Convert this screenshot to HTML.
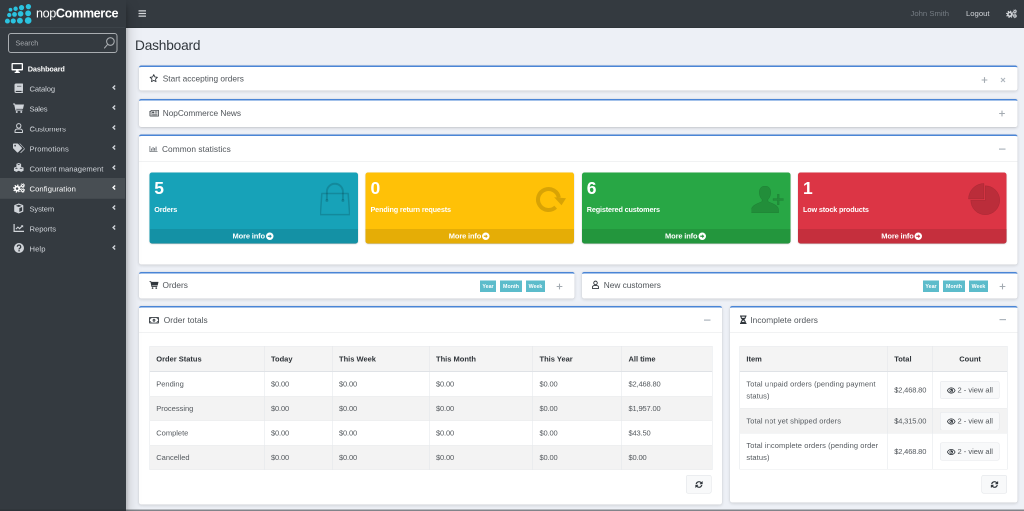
<!DOCTYPE html>
<html lang="en">
<head>
<meta charset="utf-8">
<title>Dashboard / nopCommerce administration</title>
<style>
*{box-sizing:border-box;margin:0;padding:0}
html,body{width:1024px;height:511px;overflow:hidden;background:#edf0f6}
body{font-family:"Liberation Sans",sans-serif;color:#4a4f54}
#app{position:absolute;left:0;top:0;width:2048px;height:1022px;transform:scale(.5);transform-origin:0 0;overflow:hidden;will-change:transform;font-size:15.2px;line-height:24px}
svg{display:block}
.abs{position:absolute}
/* sidebar */
#side{position:absolute;left:0;top:0;width:252px;height:1022px;background:#343a40;box-shadow:0 14px 28px rgba(0,0,0,.25),0 10px 10px rgba(0,0,0,.22);z-index:5}
#brand{position:absolute;left:0;top:0;width:250px;height:56px;border-bottom:1px solid #454c53}
#brand .txt{position:absolute;left:72px;top:6px;font-size:25.3px;line-height:40px;color:#fff;white-space:nowrap;letter-spacing:-.8px}
#brand .txt b{font-weight:bold}
#search{position:absolute;left:16px;top:66px;width:219px;height:40px;border:2px solid #a9adb1;border-radius:6px;color:#a6aaae;font-size:14.4px;line-height:36px;padding-left:13px}
#search svg{position:absolute;left:189px;top:5px}
.mi{position:absolute;left:0;width:250px;height:40px;color:#d0d4d9;line-height:40px;white-space:nowrap}
.mi .ic{position:absolute;left:26px;top:11px;width:20px;height:18px}
.mi .t{position:absolute;left:59px;top:2px}
.mi .ch{position:absolute;left:224px;top:13px}
.mi.act{color:#fff;font-weight:bold;font-size:14.6px;letter-spacing:-.25px}
.mi.act .t{left:55.5px}
.mi.hov{background:rgba(255,255,255,.1);color:#fff}
/* navbar */
#nav{position:absolute;left:250px;top:0;width:1798px;height:56px;background:#343a40;border-bottom:1px solid #2b3035}
#nav .r{position:absolute;top:15px;line-height:24px;white-space:nowrap;font-size:15.4px}
/* cards */
.card{position:absolute;background:#fff;border-top:3px solid #4a85d6;border-radius:4.500px;box-shadow:0 0 2px rgba(0,0,0,.125),0 2px 6px rgba(0,0,0,.15)}
.card .hd{position:absolute;left:0;top:0;right:0;white-space:nowrap;color:#50555a}
.card .hd .ic{position:absolute;left:21px}
.card .hd .t{position:absolute;left:48px;top:1px;font-size:16.6px}
.card .sep{position:absolute;left:0;right:0;height:1px;background:#e3e5e8}
.tool{position:absolute;color:#adb5bd}
/* small boxes */
.sb{position:absolute;top:73px;width:417px;height:142px;border-radius:5px;color:#fff;box-shadow:0 0 1px rgba(0,0,0,.125),0 1px 3px rgba(0,0,0,.2);overflow:hidden}
.sb h3{position:absolute;left:10px;top:13px;font-size:35px;line-height:36px;font-weight:bold}
.sb p{position:absolute;left:10px;top:62px;font-size:14.5px;font-weight:bold;white-space:nowrap;line-height:24px;letter-spacing:-.3px}
.sb .ft{position:absolute;left:0;right:0;bottom:0;height:30px;background:rgba(0,0,0,.1);text-align:center;line-height:30px;font-weight:bold;font-size:15px;letter-spacing:-.3px;padding-right:2px}
.sb .ft svg{display:inline-block;vertical-align:-3px;margin-left:2px}
.sb .bi{position:absolute;fill:rgba(0,0,0,.15);stroke:rgba(0,0,0,.15)}
.bt{position:absolute;top:14px;height:23px;background:#5cbccb;color:#fff;font-size:10.6px;font-weight:bold;line-height:23px;text-align:center}
/* tables */
table{border-collapse:collapse;position:absolute;table-layout:fixed;color:#555a5f;font-size:15px}
td,th{border:1px solid #e2e5e9;border-top-color:#e9ebee;border-bottom-color:#e9ebee;padding:0 0 0 13px;text-align:left;vertical-align:middle;height:49.1px;line-height:24px;white-space:nowrap}
th{height:50px;border-bottom-width:2px;border-bottom-color:#dfe2e6;background:#f4f4f4;color:#2f3439;font-weight:bold}
tr.odd td{background:#f3f3f3}
td.n{letter-spacing:-.3px}
td.w{letter-spacing:.18px}
.vb{display:block;width:119px;height:36px;border:1px solid #e3e6ea;background:#f8f9fa;border-radius:4px;line-height:34px;color:#50555a;text-align:center;margin-left:1px;font-size:15px}
.vb svg{display:inline-block;vertical-align:-2px;margin-right:4px}
.rb{position:absolute;width:51px;height:37px;border:1px solid #dfe2e6;background:#f8f9fa;border-radius:4px}
.rb svg{position:absolute;left:17px;top:10px}
</style>
</head>
<body>
<div id="app">
<div id="side">
 <div id="brand">
  <svg class="abs" style="left:0;top:0" width="72" height="56" viewBox="0 0 72 56" fill="#2bc3df">
   <circle cx="21" cy="19.400" r="3.7"/><circle cx="31.200" cy="17.500" r="4.4"/><circle cx="43.100" cy="15.200" r="5.2"/><circle cx="56.800" cy="13.300" r="5.3"/>
   <circle cx="18.500" cy="30" r="4.3"/><circle cx="29" cy="28.800" r="4.8"/><circle cx="41.200" cy="27.600" r="5.6"/><circle cx="56.300" cy="26.600" r="5.9"/>
   <circle cx="14.800" cy="42.200" r="4.9"/><circle cx="26.500" cy="41.900" r="5.2"/><circle cx="39.800" cy="41.300" r="5.9"/><circle cx="56.300" cy="41" r="6.7"/>
  </svg>
  <div class="txt" id="logotxt">nop<b>Commerce</b></div>
 </div>
 <div id="search"><span id="t_search">Search</span>
  <svg width="24" height="26" viewBox="0 0 24 26" fill="none" stroke="#a6aaae" stroke-width="2.200"><circle cx="13.800" cy="10" r="7.600"/><path d="M8.400 15.600L2 23" stroke-linecap="round"/></svg>
 </div>
 <div class="mi act" style="top:116px"><svg class="ic" style="left:23px;top:10px;width:23px;height:20px" viewBox="0 0 23 20" fill="currentColor"><path fill-rule="evenodd" d="M1.800 0h19.400A1.800 1.800 0 0 1 23 1.800v11.400a1.800 1.800 0 0 1-1.800 1.800H14l.6 2.700h2.100v2.300H6.300v-2.300h2.100L9 15H1.800A1.800 1.800 0 0 1 0 13.200V1.800A1.800 1.800 0 0 1 1.800 0zM2.600 2.600v9.300h17.800V2.600z"/></svg><span class="t" id="m0">Dashboard</span></div>
 <div class="mi" style="top:156px"><svg class="ic" style="left:29px;top:11px;width:17px;height:19px" viewBox="0 0 17 19" fill="currentColor"><path fill-rule="evenodd" d="M3.200 0H16a1 1 0 0 1 1 1v13a1 1 0 0 1-.6.900v2.200a1 1 0 0 1 .6.900v1H3.200A3.200 3.200 0 0 1 0 15.800V3.200A3.200 3.200 0 0 1 3.200 0zm.2 14.800a1 1 0 0 0 0 2.200h10.800v-2.200zM5 4.700v1.400h8.600V4.700z"/></svg><span class="t" id="m1" style="letter-spacing:-.19px">Catalog</span><svg class="ch" width="8" height="13" viewBox="0 0 8 13" fill="none" stroke="currentColor" stroke-width="2.800"><path d="M6.300 2L2.200 6l4.100 4"/></svg></div>
 <div class="mi" style="top:196px"><svg class="ic" style="left:26px;top:11px;width:22px;height:19px" viewBox="0 0 22 19" fill="currentColor"><path d="M0 0h4l.5 2H22l-2 8.700H6.300l.4 1.600H19v2H5L2.300 2H0z"/><circle cx="7.500" cy="17" r="2"/><circle cx="16.500" cy="17" r="2"/></svg><span class="t" id="m2" style="letter-spacing:-.5px">Sales</span><svg class="ch" width="8" height="13" viewBox="0 0 8 13" fill="none" stroke="currentColor" stroke-width="2.800"><path d="M6.300 2L2.200 6l4.100 4"/></svg></div>
 <div class="mi" style="top:236px"><svg class="ic" style="left:29px;top:10px;width:17px;height:20px" viewBox="0 0 17 20" fill="none" stroke="currentColor" stroke-width="2"><circle cx="8.500" cy="5.500" r="4.300"/><path d="M1 19v-2.500a4.500 4.500 0 0 1 4.500-4.500h6a4.500 4.500 0 0 1 4.500 4.500V19z" stroke-linejoin="round"/></svg><span class="t" id="m3" style="letter-spacing:-.07px">Customers</span><svg class="ch" width="8" height="13" viewBox="0 0 8 13" fill="none" stroke="currentColor" stroke-width="2.800"><path d="M6.300 2L2.200 6l4.100 4"/></svg></div>
 <div class="mi" style="top:276px"><svg class="ic" style="left:26px;top:11px;width:23px;height:19px" viewBox="0 0 23 19" fill="currentColor"><path fill-rule="evenodd" d="M0 1.500A1.500 1.500 0 0 1 1.500 0h7.200a2 2 0 0 1 1.400.6l7.300 7.300a1.800 1.800 0 0 1 0 2.500l-7 7a1.800 1.800 0 0 1-2.500 0L.6 10.100A2 2 0 0 1 0 8.700zM4.200 2.600a1.700 1.700 0 1 0 .01 0z"/><path d="M12.500 0l8.900 8.900a1.800 1.800 0 0 1 0 2.500l-7.200 7.200 1 .2a1.800 1.800 0 0 0 1.500-.5l5.800-5.800a2.500 2.500 0 0 0 0-3.600L14.700.6A2 2 0 0 0 13.300 0z"/></svg><span class="t" id="m4" style="letter-spacing:.2px">Promotions</span><svg class="ch" width="8" height="13" viewBox="0 0 8 13" fill="none" stroke="currentColor" stroke-width="2.800"><path d="M6.300 2L2.200 6l4.100 4"/></svg></div>
 <div class="mi" style="top:316px"><svg class="ic" style="left:27px;top:10px;width:21px;height:20px" viewBox="0 0 21 20" fill="currentColor"><path fill-rule="evenodd" d="M10.500 0l4.700 1.800v5.600l4.900 1.900v6.200l-4.900 2.300-4.700-2.200-4.700 2.200L.9 15.500V9.300l4.900-1.900V1.800zM7.600 3.200l2.900 1.100 2.900-1.100-2.900-1.100zM2.700 10.500l3.100 1.200 3.100-1.200-3.100-1.200zM12.100 10.500l3.100 1.200 3.100-1.200-3.100-1.200z"/></svg><span class="t" id="m5" style="letter-spacing:.1px">Content management</span><svg class="ch" width="8" height="13" viewBox="0 0 8 13" fill="none" stroke="currentColor" stroke-width="2.800"><path d="M6.300 2L2.200 6l4.100 4"/></svg></div>
 <div class="mi hov" style="top:356px;box-shadow:0 1.500px 0 #484e53"><svg class="ic" style="left:26px;top:10px;width:24px;height:20px" viewBox="0 0 24 20" fill="currentColor"><use href="#cogs"/></svg><span class="t" id="m6" style="letter-spacing:.19px">Configuration</span><svg class="ch" width="8" height="13" viewBox="0 0 8 13" fill="none" stroke="currentColor" stroke-width="2.800"><path d="M6.300 2L2.200 6l4.100 4"/></svg></div>
 <div class="mi" style="top:396px"><svg class="ic" style="left:28px;top:11px;width:19px;height:20px" viewBox="0 0 19 20" fill="currentColor"><path fill-rule="evenodd" d="M9.500 0l8.300 3.100a1.200 1.200 0 0 1 .8 1.100v11.300a1.200 1.200 0 0 1-.7 1.100L9.500 20l-8.400-3.400a1.200 1.200 0 0 1-.7-1.100V4.200a1.200 1.200 0 0 1 .8-1.100zm0 2.600L3.600 4.800l5.900 2.300 5.900-2.300zM10.700 9.300v7.600l5.500-2.300V7.100z"/></svg><span class="t" id="m7" style="letter-spacing:-.27px">System</span><svg class="ch" width="8" height="13" viewBox="0 0 8 13" fill="none" stroke="currentColor" stroke-width="2.800"><path d="M6.300 2L2.200 6l4.100 4"/></svg></div>
 <div class="mi" style="top:436px"><svg class="ic" style="left:27px;top:12px;width:21px;height:16px" viewBox="0 0 21 16" fill="none" stroke="currentColor" stroke-width="2.400"><path d="M1.200 0v14.800H21"/><path d="M4.800 10.200l4-4 3.400 3.200 5.800-5.800" stroke-width="2.200"/><path d="M14.500 2.400h4.800v4.800z" fill="currentColor" stroke="none"/></svg><span class="t" id="m8">Reports</span><svg class="ch" width="8" height="13" viewBox="0 0 8 13" fill="none" stroke="currentColor" stroke-width="2.800"><path d="M6.300 2L2.200 6l4.100 4"/></svg></div>
 <div class="mi" style="top:476px"><svg class="ic" style="left:28px;top:10px;width:20px;height:20px" viewBox="0 0 20 20"><circle cx="10" cy="10" r="10" fill="currentColor"/><path d="M6.600 7.600a3.400 3.400 0 1 1 4.900 3c-.9.500-1.400 1-1.400 2v.3" fill="none" stroke="#343a40" stroke-width="2.400"/><circle cx="10.100" cy="15.600" r="1.500" fill="#343a40"/></svg><span class="t" id="m9" style="letter-spacing:.2px">Help</span><svg class="ch" width="8" height="13" viewBox="0 0 8 13" fill="none" stroke="currentColor" stroke-width="2.800"><path d="M6.300 2L2.200 6l4.100 4"/></svg></div>
</div>

<svg width="0" height="0" style="position:absolute"><defs>
 <g id="sync"><path d="M8 1.200a6.800 6.800 0 0 1 4.800 2l1.500-1.500a.6.600 0 0 1 1 .4v4.700a.6.600 0 0 1-.6.600H10a.6.600 0 0 1-.4-1l1.500-1.500A4.400 4.400 0 0 0 3.700 7H1.300A6.800 6.800 0 0 1 8 1.200zM8 14.800a6.800 6.800 0 0 1-4.800-2l-1.500 1.500a.6.600 0 0 1-1-.4V9.200a.6.600 0 0 1 .6-.6H6a.6.600 0 0 1 .4 1l-1.500 1.500A4.400 4.400 0 0 0 12.300 9h2.400A6.800 6.800 0 0 1 8 14.800z"/></g>
 <g id="eye"><path fill="#30363c" fill-rule="evenodd" d="M8.500 0C12.400 0 15.600 2.600 17 6c-1.400 3.400-4.600 6-8.500 6S1.400 9.400 0 6C1.400 2.600 4.600 0 8.500 0zm0 1.600C5.600 1.600 3 3.400 1.800 6 3 8.600 5.600 10.400 8.500 10.400S14 8.600 15.200 6C14 3.400 11.400 1.600 8.500 1.600zm0 .9a3.500 3.500 0 1 1 0 7 3.500 3.500 0 0 1 0-7zm-.3 1.300a2.200 2.200 0 1 0 2.500 2.500 1.300 1.300 0 0 1-2.500-2.500z"/></g>
</defs></svg>
<svg width="0" height="0" style="position:absolute"><defs>
 <g id="cogs"><path fill-rule="evenodd" d="M8.200 5.400a5.800 5.800 0 1 0 .01 0zM8.200 8.700a2.500 2.500 0 1 1-.01 0z"/><circle cx="8.200" cy="11.200" r="6.700" fill="none" stroke="currentColor" stroke-width="2.800" stroke-dasharray="2.630 2.630"/><path fill-rule="evenodd" d="M19.400 2.100a3.200 3.200 0 1 0 .01 0zM19.400 4a1.300 1.300 0 1 1-.01 0z"/><circle cx="19.400" cy="5.300" r="3.900" fill="none" stroke="currentColor" stroke-width="1.800" stroke-dasharray="1.530 1.530"/><path fill-rule="evenodd" d="M19.400 11.700a3.200 3.200 0 1 0 .01 0zM19.400 13.600a1.300 1.300 0 1 1-.01 0z"/><circle cx="19.400" cy="14.900" r="3.900" fill="none" stroke="currentColor" stroke-width="1.800" stroke-dasharray="1.530 1.530"/></g>
</defs></svg>
<div id="nav">
 <svg class="abs" style="left:27px;top:20px" width="15" height="14" viewBox="0 0 15 14" fill="#d5d8db"><rect y="0.500" width="15" height="2.600" rx=".6"/><rect y="5.700" width="15" height="2.600" rx=".6"/><rect y="10.900" width="15" height="2.600" rx=".6"/></svg>
 <span class="r" id="n_john" style="left:1571px;color:#757c83">John Smith</span>
 <span class="r" id="n_logout" style="left:1682px;color:#d3d6da">Logout</span>
 <svg class="abs" style="left:1762px;top:18px;color:#d3d6da" width="22" height="19" viewBox="0 0 24 20" fill="currentColor"><use href="#cogs"/></svg>
</div>

<div class="abs" id="title" style="left:270px;top:73.500px;font-size:27.4px;letter-spacing:-.38px;line-height:34px;color:#30363c;white-space:nowrap">Dashboard</div>

<!-- card 1 -->
<div class="card" style="left:277.5px;top:131px;width:1757px;height:50.400px">
 <div class="hd" style="line-height:24px;top:11px;height:24px">
  <svg class="ic" style="top:3px" width="17" height="17" viewBox="0 0 17 17" fill="none" stroke="#30363c" stroke-width="1.700" stroke-linejoin="round"><path d="M8.500 1.200l2.200 4.700 5.100.7-3.700 3.600.9 5.100-4.500-2.500-4.500 2.500.9-5.100L1.200 6.600l5.100-.7z"/></svg>
  <span class="t" id="c1t">Start accepting orders</span>
 </div>
 <svg class="tool" style="left:1685.500px;top:20px" width="12" height="12" viewBox="0 0 12 12" stroke="#a4abb2" stroke-width="2.200"><path d="M6 .3v11.400M.3 6h11.400"/></svg>
 <svg class="tool" style="left:1723.500px;top:21px" width="10" height="10" viewBox="0 0 10 10" stroke="#adb5bd" stroke-width="2.200"><path d="M1 1l8 8M9 1l-8 8"/></svg>
</div>

<!-- card 2 -->
<div class="card" style="left:277.5px;top:198px;width:1757px;height:55.500px">
 <div class="hd" style="line-height:24px;top:13px;height:24px">
  <svg class="ic" style="top:6px" width="19" height="13" viewBox="0 0 19 13" fill="#4a4f54"><path fill-rule="evenodd" d="M3.400 0H17.800A1.200 1.200 0 0 1 19 1.200V11.800A1.200 1.200 0 0 1 17.800 13H1.800A1.800 1.800 0 0 1 0 11.200V2h2.200V1.200A1.200 1.200 0 0 1 3.400 0zM3.800 1.600V11.400H17.400V1.600zM1.400 3.400v7.600a.5.500 0 0 0 1 0V3.400zM5.200 3h4.400v3.600H5.200zM11 3h5v1.300h-5zM11 5.300h5v1.300h-5zM5.200 7.700H16V9H5.200zM5.200 9.800H16v.9H5.200z"/></svg>
  <span class="t" id="c2t" style="letter-spacing:-.08px">NopCommerce News</span>
 </div>
 <svg class="tool" style="left:1720px;top:19.500px" width="12" height="12" viewBox="0 0 12 12" stroke="#a4abb2" stroke-width="2.200"><path d="M6 .3v11.400M.3 6h11.400"/></svg>
</div>

<!-- card 3 -->
<div class="card" style="left:277.5px;top:268.800px;width:1757px;height:260px">
 <div class="hd" style="line-height:24px;top:14px;height:24px">
  <svg class="ic" style="top:6px" width="16" height="12" viewBox="0 0 16 12" fill="#70767c"><path d="M0 0h1.600v10.400H16V12H0z"/><rect x="3.200" y="5" width="1.900" height="4.400"/><rect x="6.200" y="2" width="1.900" height="7.400"/><rect x="9.200" y="4" width="1.900" height="5.400"/><rect x="12.200" y="1.200" width="1.900" height="8.200"/></svg>
  <span class="t" id="c3t" style="left:46.500px;letter-spacing:.12px">Common statistics</span>
 </div>
 <svg class="tool" style="left:1720px;top:25.500px" width="13" height="3" viewBox="0 0 13 3" fill="#adb5bd"><rect width="13" height="2.400"/></svg>
 <div class="sep" style="top:50px"></div>

 <div class="sb" style="left:21px;background:#17a2b8">
  <h3>5</h3><p id="sb1">Orders</p>
  <svg class="bi" style="left:341px;top:20px;fill:none" width="60" height="66" viewBox="0 0 60 66" stroke-width="3"><path d="M3.700 22h52.600l3 42.300H.7z" stroke-linejoin="round"/><path d="M13.800 35.500V18.500a16 16 0 0 1 32 0v17" stroke-width="3.800"/><circle cx="13.800" cy="36" r="3" style="fill:rgba(0,0,0,.15);stroke:none"/><circle cx="45.800" cy="36" r="3" style="fill:rgba(0,0,0,.15);stroke:none"/></svg>
  <div class="ft"><span id="mi1">More info</span><svg width="15" height="15" viewBox="0 0 15 15"><circle cx="7.500" cy="7.500" r="7.500" fill="#fff"/><path d="M3.500 6.300h4V3.600l4 3.900-4 3.900V8.700h-4z" fill="#148ea1"/></svg></div>
 </div>
 <div class="sb" style="left:453.500px;background:#ffc107">
  <h3>0</h3><p id="sb2">Pending return requests</p>
  <svg class="bi" style="left:338.750px;top:26.250px;opacity:.15" width="66" height="56" viewBox="0 0 66 56"><path d="M41.300 43.400A21 21 0 1 1 47.700 24.350" style="fill:none;stroke:#000;stroke-width:8"/><path d="M38.250 23.500L62 25.500 53 39.500z" style="stroke:none;fill:#000"/></svg>
  <div class="ft"><span>More info</span><svg width="15" height="15" viewBox="0 0 15 15"><circle cx="7.500" cy="7.500" r="7.500" fill="#fff"/><path d="M3.500 6.300h4V3.600l4 3.900-4 3.900V8.700h-4z" fill="#e0aa06"/></svg></div>
 </div>
 <div class="sb" style="left:886px;background:#28a745">
  <h3>6</h3><p id="sb3">Registered customers</p>
  <svg class="bi" style="left:339px;top:27px" width="64" height="54" viewBox="0 0 64 54" stroke="none"><path d="M27 0c7 0 11.500 5 11.500 12.500 0 6-2.200 11-5 13.500-.8.800-.8 4.600.2 5.300C38 34 53 37.500 54 46c.3 3 .3 6 0 8H0c-.3-2-.3-5 0-8 1-8.500 16-12 20.300-14.700 1-.700 1-4.500.2-5.300-2.800-2.500-5-7.500-5-13.500C15.500 5 20 0 27 0z"/><path d="M51.700 16.500h3.600v8.700H64v3.600h-8.700v8.700h-3.600v-8.700H43v-3.600h8.700z"/></svg>
  <div class="ft"><span>More info</span><svg width="15" height="15" viewBox="0 0 15 15"><circle cx="7.500" cy="7.500" r="7.500" fill="#fff"/><path d="M3.500 6.300h4V3.600l4 3.900-4 3.900V8.700h-4z" fill="#24963e"/></svg></div>
 </div>
 <div class="sb" style="left:1318.500px;background:#dc3545">
  <h3>1</h3><p id="sb4">Low stock products</p>
  <svg class="bi" style="left:340px;top:20px" width="66" height="66" viewBox="0 0 66 66" stroke="none"><path d="M34.500 35.500V6.500A29 29 0 1 1 5.500 35.500z"/><path d="M32 33H1A31 31 0 0 1 32 2z"/></svg>
  <div class="ft"><span>More info</span><svg width="15" height="15" viewBox="0 0 15 15"><circle cx="7.500" cy="7.500" r="7.500" fill="#fff"/><path d="M3.500 6.300h4V3.600l4 3.900-4 3.900V8.700h-4z" fill="#c62f3e"/></svg></div>
 </div>
</div>

<!-- card 4a -->
<div class="card" style="left:277.5px;top:544px;width:871px;height:52.500px">
 <div class="hd" style="line-height:24px;top:11px;height:24px">
  <svg class="ic" style="top:4px" width="18" height="16" viewBox="0 0 22 19" fill="#30363c"><path d="M0 0h4l.5 2H22l-2 8.700H6.300l.4 1.600H19v2H5L2.300 2H0z"/><circle cx="7.500" cy="17" r="2"/><circle cx="16.500" cy="17" r="2"/></svg>
  <span class="t" id="c4t" style="left:47.500px">Orders</span>
 </div>
 <div class="bt" style="left:682.500px;width:32px">Year</div>
 <div class="bt" style="left:722.500px;width:44px">Month</div>
 <div class="bt" style="left:774.500px;width:38px">Week</div>
 <svg class="tool" style="left:835.500px;top:19.500px" width="12" height="12" viewBox="0 0 12 12" stroke="#a4abb2" stroke-width="2.200"><path d="M6 .3v11.400M.3 6h11.400"/></svg>
</div>
<!-- card 4b -->
<div class="card" style="left:1164px;top:544px;width:870.500px;height:52.500px">
 <div class="hd" style="line-height:24px;top:11px;height:24px">
  <svg class="ic" style="left:20px;top:3px" width="14" height="17" viewBox="0 0 17 20" fill="none" stroke="#30363c" stroke-width="2.200"><circle cx="8.500" cy="5.500" r="4.300"/><path d="M1 19v-2.500a4.500 4.500 0 0 1 4.500-4.500h6a4.500 4.500 0 0 1 4.500 4.500V19z" stroke-linejoin="round"/></svg>
  <span class="t" id="c4bt" style="left:43.500px">New customers</span>
 </div>
 <div class="bt" style="left:682px;width:32px">Year</div>
 <div class="bt" style="left:722px;width:44px">Month</div>
 <div class="bt" style="left:774px;width:38px">Week</div>
 <svg class="tool" style="left:835px;top:19.500px" width="12" height="12" viewBox="0 0 12 12" stroke="#a4abb2" stroke-width="2.200"><path d="M6 .3v11.400M.3 6h11.400"/></svg>
</div>

<!-- card 5 -->
<div class="card" style="left:277.5px;top:611.800px;width:1166.300px;height:397.400px">
 <div class="hd" style="line-height:24px;top:13px;height:24px">
  <svg class="ic" style="left:20px;top:6px" width="20" height="13" viewBox="0 0 20 13" fill="none" stroke="#3a4046" stroke-width="1.800"><rect x=".9" y=".9" width="18.200" height="11.200" rx="1"/><path d="M1 4.200A3.200 3.200 0 0 0 4.200 1M15.800 1A3.200 3.200 0 0 0 19 4.200M19 8.800A3.200 3.200 0 0 0 15.800 12M4.200 12A3.200 3.200 0 0 0 1 8.800" stroke-width="1.500"/><ellipse cx="10" cy="6.500" rx="2.700" ry="3" fill="#3a4046" stroke="none"/><path d="M10 5v3" stroke="#fff" stroke-width=".9"/></svg>
  <span class="t" id="c5t" style="left:50px;letter-spacing:.1px">Order totals</span>
 </div>
 <svg class="tool" style="left:1130px;top:24.500px" width="13" height="3" viewBox="0 0 13 3" fill="#adb5bd"><rect width="13" height="2.400"/></svg>
 <div class="sep" style="top:49.500px"></div>
 <table style="left:21px;top:77.700px;width:1125px">
  <colgroup><col style="width:229.500px"><col style="width:136px"><col style="width:194px"><col style="width:207px"><col style="width:178px"><col style="width:180.500px"></colgroup>
  <tr><th><span id="th1">Order Status</span></th><th><span id="th2">Today</span></th><th><span id="th3">This Week</span></th><th><span id="th4">This Month</span></th><th>This Year</th><th>All time</th></tr>
  <tr><td>Pending</td><td class="n">$0.00</td><td class="n">$0.00</td><td class="n">$0.00</td><td class="n">$0.00</td><td class="n">$2,468.80</td></tr>
  <tr class="odd"><td><span id="td_proc">Processing</span></td><td class="n">$0.00</td><td class="n">$0.00</td><td class="n">$0.00</td><td class="n">$0.00</td><td class="n">$1,957.00</td></tr>
  <tr><td>Complete</td><td class="n">$0.00</td><td class="n">$0.00</td><td class="n">$0.00</td><td class="n">$0.00</td><td class="n">$43.50</td></tr>
  <tr class="odd"><td><span id="td_canc">Cancelled</span></td><td class="n"><span id="td_0">$0.00</span></td><td class="n">$0.00</td><td class="n">$0.00</td><td class="n">$0.00</td><td class="n">$0.00</td></tr>
 </table>
 <div class="rb" style="left:1094.500px;top:335.400px"><svg width="16" height="16" viewBox="0 0 16 16" fill="#30363c"><use href="#sync"/></svg></div>
</div>

<!-- card 6 -->
<div class="card" style="left:1459.500px;top:611.800px;width:575px;height:393.600px">
 <div class="hd" style="line-height:24px;top:13px;height:24px">
  <svg class="ic" style="left:20px;top:3px" width="13" height="17" viewBox="0 0 13 17" fill="#30363c"><path fill-rule="evenodd" d="M0 0h13v2.200h-1.100c0 3.200-1.500 5-3.300 6.300 1.800 1.300 3.300 3.100 3.300 6.300H13V17H0v-2.200h1.100c0-3.200 1.500-5 3.300-6.300C2.600 7.200 1.100 5.400 1.100 2.200H0zM3.300 2.200c0 1 .2 1.800.6 2.500h5.200c.4-.7.600-1.500.6-2.500zM6.500 9.800c-1.200.8-2.300 1.700-2.800 3h5.600c-.5-1.300-1.600-2.200-2.800-3z"/></svg>
  <span class="t" id="c6t" style="left:41px;letter-spacing:.16px">Incomplete orders</span>
 </div>
 <svg class="tool" style="left:539px;top:23.500px" width="13" height="3" viewBox="0 0 13 3" fill="#adb5bd"><rect width="13" height="2.400"/></svg>
 <div class="sep" style="top:49.500px"></div>
 <table style="left:19.300px;top:77.700px;width:535.200px">
  <colgroup><col style="width:295.600px"><col style="width:91px"><col style="width:148.600px"></colgroup>
  <tr><th>Item</th><th>Total</th><th style="text-align:center;padding:0">Count</th></tr>
  <tr><td class="w" style="height:74px"><span id="td_unpaid">Total unpaid orders (pending payment</span><br>status)</td><td class="n"><span id="td_2468">$2,468.80</span></td><td><span class="vb"><svg width="17" height="12" viewBox="0 0 17 12"><use href="#eye"/></svg><span id="vb1">2 - view all</span></span></td></tr>
  <tr class="odd"><td class="w" style="height:50px"><span id="td_ship">Total not yet shipped orders</span></td><td class="n">$4,315.00</td><td><span class="vb"><svg width="17" height="12" viewBox="0 0 17 12"><use href="#eye"/></svg>2 - view all</span></td></tr>
  <tr><td class="w" style="height:72px">Total incomplete orders (pending order<br>status)</td><td class="n">$2,468.80</td><td><span class="vb"><svg width="17" height="12" viewBox="0 0 17 12"><use href="#eye"/></svg>2 - view all</span></td></tr>
 </table>
 <div class="rb" style="left:503.500px;top:335px"><svg width="16" height="16" viewBox="0 0 16 16" fill="#30363c"><use href="#sync"/></svg></div>
</div>
<div class="abs" style="left:0;top:1019.400px;width:2048px;height:3px;background:rgba(40,44,50,.55);z-index:9"></div>

</div>
</body>
</html>
